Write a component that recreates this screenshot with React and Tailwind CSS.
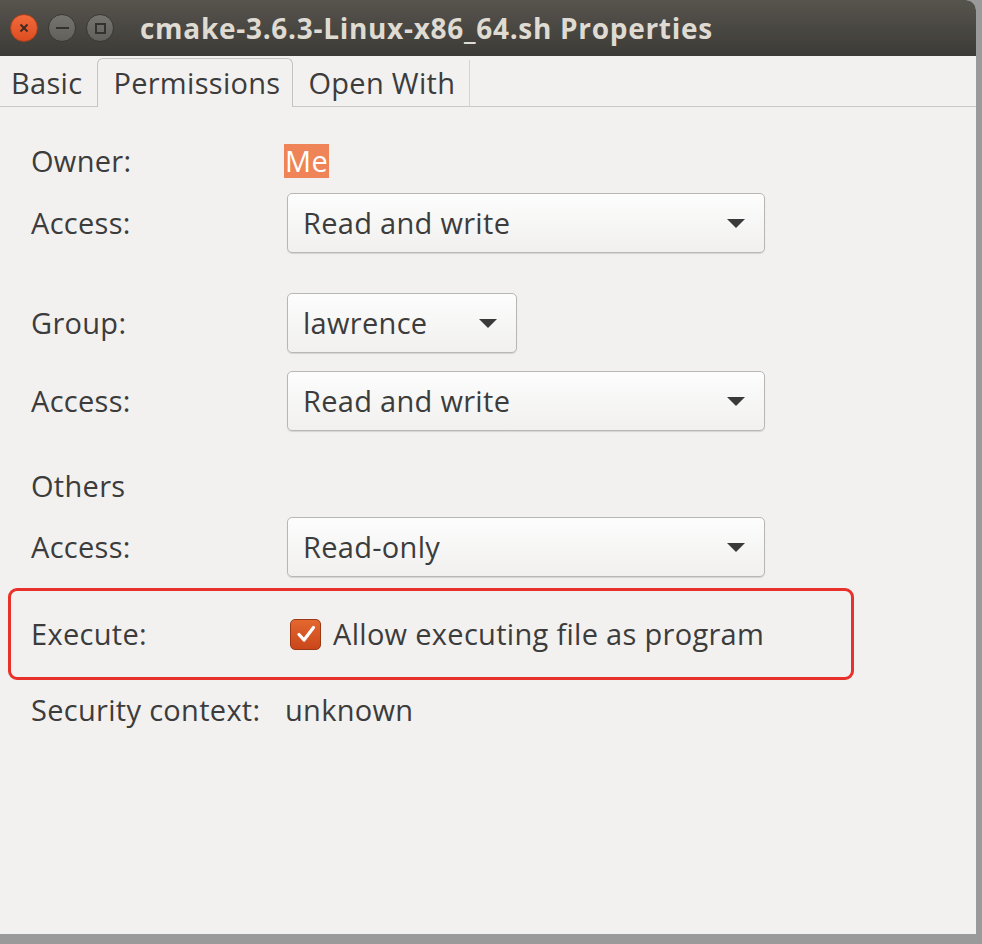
import React from "react";

const font = { fontFamily: '"Open Sans", "DejaVu Sans", sans-serif' };

function Arrow() {
  return (
    <svg width="20" height="11" viewBox="0 0 20 11" className="shrink-0">
      <path d="M1 1 L19 1 L10 10 Z" fill="#3a3a3a" />
    </svg>
  );
}

function Dropdown({ value, wide = true }) {
  return (
    <div
      className={`flex h-[60px] items-center justify-between rounded-[5px] border border-[#b9b7b3] bg-gradient-to-b from-[#fdfdfd] to-[#f1f0ef] pl-[15px] pr-[18px] shadow-[0_1px_1px_rgba(0,0,0,0.12)] ${
        wide ? "w-[478px]" : "w-[230px]"
      }`}
    >
      <span className="text-[29px] leading-[36px] tracking-[0.3px] text-[#3c3c3c]">{value}</span>
      <Arrow />
    </div>
  );
}

function Row({ label, children, className = "" }) {
  return (
    <div className={`flex items-center ${className}`}>
      <div className="w-[256px] shrink-0 text-[29px] leading-[36px] tracking-[0.3px] text-[#3c3c3c]">{label}</div>
      {children}
    </div>
  );
}

export default function App() {
  return (
    <div className="h-[944px] w-[982px] bg-[#9a9a9a] overflow-hidden" style={font}>
      <div className="flex h-[934px] w-[976px] flex-col bg-[#f2f1f0] rounded-tr-[10px] overflow-hidden">
        {/* title bar */}
        <div className="flex h-[56px] shrink-0 items-center bg-gradient-to-b from-[#57544e] to-[#3d3b37] pl-[10px]">
          <div className="flex items-center gap-[10px]">
            <div className="flex h-[28px] w-[28px] items-center justify-center rounded-full border border-[#a8401c] bg-gradient-to-b from-[#f26a3c] to-[#dc4d1f]">
              <svg width="10" height="10" viewBox="0 0 10 10">
                <path d="M1.5 1.5 L8.5 8.5 M8.5 1.5 L1.5 8.5" stroke="#3a2a22" strokeWidth="1.8" />
              </svg>
            </div>
            <div className="flex h-[28px] w-[28px] items-center justify-center rounded-full border border-[#3a3935] bg-gradient-to-b from-[#76746f] to-[#62605b]">
              <div className="h-[2px] w-[13px] bg-[#33322f]" />
            </div>
            <div className="flex h-[28px] w-[28px] items-center justify-center rounded-full border border-[#3a3935] bg-gradient-to-b from-[#76746f] to-[#62605b]">
              <div className="h-[11px] w-[11px] border-2 border-[#33322f]" />
            </div>
          </div>
          <div className="ml-[26px] text-[28px] leading-[36px] font-bold text-[#dfdbd2] tracking-[0.7px]">
            cmake-3.6.3-Linux-x86_64.sh Properties
          </div>
        </div>

        {/* tabs */}
        <div className="flex h-[51px] shrink-0 items-end border-b border-[#c9c8c6] text-[29px] leading-[36px] tracking-[0.3px] text-[#3c3c3c]">
          <div className="flex h-[46px] items-center pl-[11px] pr-[15px]">Basic</div>
          <div className="relative -mb-px flex h-[49px] items-center rounded-t-[6px] border border-b-0 border-[#c4c3c0] bg-[#f2f1f0] pl-[15px] pr-[12px]">
            Permissions
          </div>
          <div className="flex h-[46px] items-center border-r border-[#d4d3d0] pl-[15px] pr-[14px]">Open With</div>
        </div>

        {/* content */}
        <div className="flex flex-col pl-[31px] pt-[36px]">
          <Row label="Owner:" className="h-[36px]">
            <span className="ml-[-3px] bg-[#ee8458] px-[1px] text-[29px] leading-[34px] tracking-[0.3px] text-white">Me</span>
          </Row>
          <Row label="Access:" className="mt-[14px]">
            <Dropdown value="Read and write" />
          </Row>
          <Row label="Group:" className="mt-[40px]">
            <Dropdown value="lawrence" wide={false} />
          </Row>
          <Row label="Access:" className="mt-[18px]">
            <Dropdown value="Read and write" />
          </Row>
          <Row label="Others" className="mt-[37px] h-[36px]" />
          <Row label="Access:" className="mt-[13px]">
            <Dropdown value="Read-only" />
          </Row>

          <div className="ml-[-23px] mt-[11px] flex h-[92px] w-[846px] items-center rounded-[9px] border-[3px] border-[#e8312a] pl-[20px]">
            <div className="w-[256px] shrink-0 text-[29px] leading-[36px] tracking-[0.3px] text-[#3c3c3c]">Execute:</div>
            <div className="ml-[3px] flex h-[31px] w-[31px] items-center justify-center rounded-[5px] border border-[#9a3a14] bg-gradient-to-b from-[#e4672f] to-[#c9461a]">
              <svg width="20" height="18" viewBox="0 0 20 18">
                <path d="M3 9.5 L8 15 L17.5 2.5" stroke="white" strokeWidth="3.2" fill="none" strokeLinecap="round" strokeLinejoin="round" />
              </svg>
            </div>
            <span className="ml-[12px] text-[29px] leading-[36px] tracking-[0.3px] text-[#3c3c3c]">Allow executing file as program</span>
          </div>

          <Row label="Security context:" className="mt-[12px] h-[36px]">
            <span className="ml-[-2px] text-[29px] leading-[36px] tracking-[0.3px] text-[#3c3c3c]">unknown</span>
          </Row>
        </div>
      </div>
    </div>
  );
}
